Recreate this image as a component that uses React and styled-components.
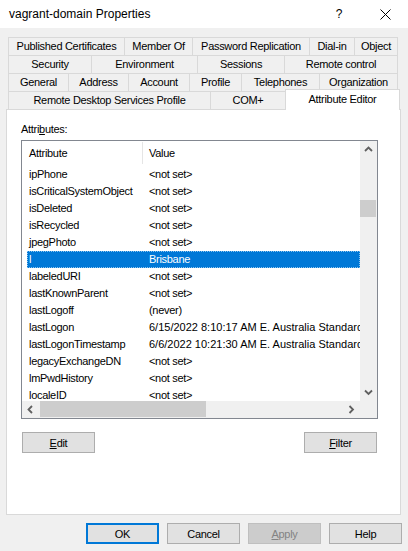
import React from 'react';
import styled, { createGlobalStyle } from 'styled-components';

const GlobalStyle = createGlobalStyle`
  html, body { margin: 0; padding: 0; background: #f0f0f0; }
  body { font-family: "Liberation Sans", Arial, sans-serif; font-size: 11px; color: #000; }
  * { box-sizing: border-box; }
`;

const Window = styled.div`
  width: 408px;
  height: 551px;
  background: #f0f0f0;
  display: flex;
  flex-direction: column;
  overflow: hidden;
  font-family: "Liberation Sans", Arial, sans-serif;
  font-size: 11px;
  letter-spacing: -0.3px;
`;

const TitleBar = styled.div`
  height: 28px;
  flex-shrink: 0;
  background: #fff;
  display: flex;
  align-items: center;
  padding-left: 9px;
`;

const TitleText = styled.div`
  flex: 1;
  font-size: 12px;
  letter-spacing: 0;
  line-height: 28px;
`;

const TitleButton = styled.div`
  width: 46px;
  height: 28px;
  display: flex;
  align-items: center;
  justify-content: center;
  font-size: 12px;
  letter-spacing: 0;
`;

const TabStrip = styled.div`
  margin-top: 9px;
  padding-left: 8px;
  display: flex;
  flex-direction: column;
`;

const TabRow = styled.div`
  display: flex;
  height: 18px;
`;

const Tab = styled.div`
  width: ${p => p.$w}px;
  height: 18px;
  flex-shrink: 0;
  border-top: 1px solid #d9d9d9;
  border-left: 1px solid #d9d9d9;
  border-right: ${p => (p.$last ? '1px solid #d9d9d9' : 'none')};
  background: #f0f0f0;
  text-align: center;
  line-height: 17px;
  white-space: nowrap;
`;

const ActiveTab = styled.div`
  position: relative;
  z-index: 1;
  width: ${p => p.$w}px;
  height: 21px;
  margin-top: -2px;
  align-self: flex-start;
  flex-shrink: 0;
  background: #fff;
  border: 1px solid #d9d9d9;
  border-bottom: none;
  text-align: center;
  line-height: 18px;
  white-space: nowrap;
`;

const Panel = styled.div`
  margin-left: 6px;
  width: 395px;
  height: 406px;
  flex-shrink: 0;
  background: #fff;
  border: 1px solid #d9d9d9;
  padding: 13px 22px 0 14px;
  display: flex;
  flex-direction: column;
`;

const FieldLabel = styled.div`
  height: 13px;
  line-height: 13px;
  margin-bottom: 4px;
`;

const Mnemonic = styled.span`
  text-decoration: underline;
  text-underline-offset: 1px;
`;

const ListBox = styled.div`
  height: 279px;
  border: 1px solid #828790;
  background: #fff;
  display: grid;
  grid-template-columns: 1fr 17px;
  grid-template-rows: 1fr 17px;
`;

const ListContent = styled.div`
  overflow: hidden;
  display: flex;
  flex-direction: column;
`;

const Header = styled.div`
  height: 25px;
  flex-shrink: 0;
  display: flex;
`;

const HeaderCell = styled.div`
  width: ${p => (p.$w ? `${p.$w}px` : 'auto')};
  flex: ${p => (p.$w ? '0 0 auto' : '1')};
  padding-left: ${p => p.$pad}px;
  line-height: 25px;
`;

const HeaderDivider = styled.div`
  width: 1px;
  height: 22px;
  margin-top: 1px;
  background: #e5e5e5;
  flex-shrink: 0;
`;

const Row = styled.div`
  margin-left: 5px;
  height: 17px;
  flex-shrink: 0;
  display: flex;
  white-space: nowrap;
  overflow: hidden;
  line-height: 17px;
  background: ${p => (p.$selected ? '#0078d7' : 'transparent')};
  color: ${p => (p.$selected ? '#fff' : '#000')};
  outline: ${p => (p.$selected ? '1px dotted #8cc4f0' : 'none')};
  outline-offset: -1px;
`;

const AttrCell = styled.div`
  width: 115px;
  flex-shrink: 0;
  padding-left: 2px;
  overflow: hidden;
`;

const ValueCell = styled.div`
  padding-left: 7px;
  flex-shrink: 0;
  letter-spacing: ${p => (p.$numeric ? '0' : '-0.3px')};
`;

const VScroll = styled.div`
  background: #f0f0f0;
  display: flex;
  flex-direction: column;
`;

const HScroll = styled.div`
  background: #f0f0f0;
  display: flex;
`;

const Corner = styled.div`
  background: #f0f0f0;
`;

const ArrowButton = styled.div`
  width: 17px;
  height: 17px;
  flex-shrink: 0;
  display: flex;
  align-items: center;
  justify-content: center;
`;

const Track = styled.div`
  flex: 1;
  display: flex;
  flex-direction: ${p => (p.$vertical ? 'column' : 'row')};
`;

const Thumb = styled.div`
  background: #cdcdcd;
  flex-shrink: 0;
  ${p =>
    p.$vertical
      ? `height: ${p.$size}px; margin-top: ${p.$offset}px; width: 16px;`
      : `width: ${p.$size}px; margin-left: ${p.$offset}px; height: 16px;`}
`;

const ActionRow = styled.div`
  margin-top: 13px;
  padding: 0 1px;
  display: flex;
  justify-content: space-between;
`;

const Button = styled.button`
  width: 73px;
  height: 21px;
  padding: 0;
  margin: 0;
  font-family: "Liberation Sans", Arial, sans-serif;
  font-size: 11px;
  letter-spacing: -0.3px;
  color: ${p => (p.$disabled ? '#838383' : '#000')};
  background: ${p => (p.$disabled ? '#cccccc' : '#e1e1e1')};
  border: ${p =>
    p.$default ? '2px solid #0078d7' : p.$disabled ? '1px solid #bfbfbf' : '1px solid #adadad'};
`;

const ButtonBar = styled.div`
  margin-top: 8px;
  padding-right: 6px;
  display: flex;
  justify-content: flex-end;
  gap: 8px;
`;

const Chevron = ({ dir }) => {
  const pts = {
    up: '1,5 4.5,1.5 8,5',
    down: '1,1.5 4.5,5 8,1.5',
    left: '5,1 1.5,4.5 5,8',
    right: '1.5,1 5,4.5 1.5,8',
  }[dir];
  const vertical = dir === 'up' || dir === 'down';
  return (
    <svg width={vertical ? 9 : 7} height={vertical ? 7 : 9} viewBox={vertical ? '0 0 9 7' : '0 0 7 9'}>
      <polyline points={pts} fill="none" stroke="#606060" strokeWidth="1.8" />
    </svg>
  );
};

const tabRows = [
  [['Published Certificates', 116], ['Member Of', 68], ['Password Replication', 117], ['Dial-in', 45], ['Object', 44]],
  [['Security', 83], ['Environment', 106], ['Sessions', 87], ['Remote control', 114]],
  [['General', 60], ['Address', 60], ['Account', 61], ['Profile', 52], ['Telephones', 78], ['Organization', 79]],
];

const attributes = [
  ['ipPhone', '<not set>'],
  ['isCriticalSystemObject', '<not set>'],
  ['isDeleted', '<not set>'],
  ['isRecycled', '<not set>'],
  ['jpegPhoto', '<not set>'],
  ['l', 'Brisbane', true],
  ['labeledURI', '<not set>'],
  ['lastKnownParent', '<not set>'],
  ['lastLogoff', '(never)'],
  ['lastLogon', '6/15/2022 8:10:17 AM E. Australia Standard Time'],
  ['lastLogonTimestamp', '6/6/2022 10:21:30 AM E. Australia Standard Time'],
  ['legacyExchangeDN', '<not set>'],
  ['lmPwdHistory', '<not set>'],
  ['localeID', '<not set>'],
];

export default function App() {
  return (
    <>
      <GlobalStyle />
      <Window>
        <TitleBar>
          <TitleText>vagrant-domain Properties</TitleText>
          <TitleButton>?</TitleButton>
          <TitleButton>
            <svg width="11" height="11" viewBox="0 0 11 11">
              <path d="M0.5 0.5 L10.5 10.5 M10.5 0.5 L0.5 10.5" stroke="#000" strokeWidth="1" />
            </svg>
          </TitleButton>
        </TitleBar>

        <TabStrip>
          {tabRows.map((row, i) => (
            <TabRow key={i}>
              {row.map(([label, w], j) => (
                <Tab key={label} $w={w} $last={j === row.length - 1}>
                  {label}
                </Tab>
              ))}
            </TabRow>
          ))}
          <TabRow>
            <Tab $w={202}>Remote Desktop Services Profile</Tab>
            <Tab $w={75}>COM+</Tab>
            <ActiveTab $w={115}>Attribute Editor</ActiveTab>
          </TabRow>
        </TabStrip>

        <Panel>
          <FieldLabel>
            Attri<Mnemonic>b</Mnemonic>utes:
          </FieldLabel>
          <ListBox>
            <ListContent>
              <Header>
                <HeaderCell $w={120} $pad={7}>Attribute</HeaderCell>
                <HeaderDivider />
                <HeaderCell $pad={6}>Value</HeaderCell>
              </Header>
              {attributes.map(([name, value, sel]) => (
                <Row key={name} $selected={sel}>
                  <AttrCell>{name}</AttrCell>
                  <ValueCell $numeric={/\d/.test(value)}>{value}</ValueCell>
                </Row>
              ))}
            </ListContent>
            <VScroll>
              <ArrowButton><Chevron dir="up" /></ArrowButton>
              <Track $vertical>
                <Thumb $vertical $size={17} $offset={42} />
              </Track>
              <ArrowButton><Chevron dir="down" /></ArrowButton>
            </VScroll>
            <HScroll>
              <ArrowButton><Chevron dir="left" /></ArrowButton>
              <Track>
                <Thumb $size={166} $offset={1} />
              </Track>
              <ArrowButton><Chevron dir="right" /></ArrowButton>
            </HScroll>
            <Corner />
          </ListBox>
          <ActionRow>
            <Button><Mnemonic>E</Mnemonic>dit</Button>
            <Button><Mnemonic>F</Mnemonic>ilter</Button>
          </ActionRow>
        </Panel>

        <ButtonBar>
          <Button $default>OK</Button>
          <Button>Cancel</Button>
          <Button $disabled><Mnemonic>A</Mnemonic>pply</Button>
          <Button>Help</Button>
        </ButtonBar>
      </Window>
    </>
  );
}
